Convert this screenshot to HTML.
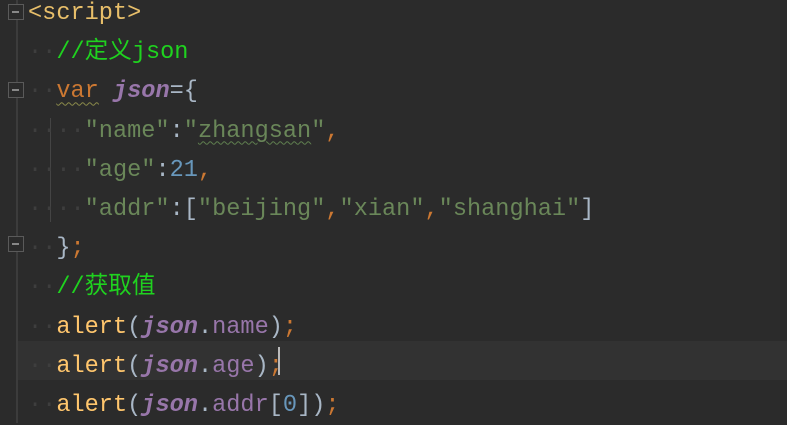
<html><head><style>
body{margin:0;width:787px;height:423px;background:#2b2b2b;overflow:hidden;position:relative;font-family:"Liberation Mono","Noto Sans CJK SC",monospace;}
.cur{position:absolute;left:17px;top:341px;width:770px;height:39px;background:#323232}
.gut{position:absolute;left:16px;top:0;width:2px;height:423px;background:#3c3c3c}
.code{position:absolute;left:28px;top:-6px;font-size:23.6px;line-height:39.2px;color:#a9b7c6;white-space:pre}
.t{color:#e8bf6a}.c{color:#1fd21f}.k{color:#cc7832}.j{color:#9876aa;font-style:italic;font-weight:bold}.s{color:#6a8759}.n{color:#6897bb}.p{color:#9876aa}.f{color:#ffc66d}
.d{color:#3e3e3e}
.w{text-decoration:underline wavy #8a8a4a;text-decoration-thickness:1px;text-underline-offset:4px}
.ws{text-decoration:underline wavy #5f7f4f;text-decoration-thickness:1px;text-underline-offset:4px}
.fold{position:absolute;left:8px;width:16px;height:16px;border:1.5px solid #5a5a5a;background:#2b2b2b;box-sizing:border-box}
.fold:after{content:"";position:absolute;left:3px;top:6px;width:7px;height:1.5px;background:#888}
.caret{position:absolute;left:278px;top:347px;width:2px;height:28px;background:#bbb}
.vg{position:absolute;left:50px;top:118px;width:1px;height:104px;background:#444}
</style></head><body>
<div class="cur"></div><div class="gut"></div><div class="vg"></div>
<div class="fold" style="top:4px"></div>
<div class="fold" style="top:82px"></div>
<div class="fold" style="top:236px"></div>
<div class="caret"></div>
<div class="code"><span class="t">&lt;script&gt;</span>
<span class="d">··</span><span class="c">//定义json</span>
<span class="d">··</span><span class="k w">var</span> <span class="j">json</span>={
<span class="d">····</span><span class="s">"name"</span>:<span class="s">"<span class="ws">zhangsan</span>"</span><span class="k">,</span>
<span class="d">····</span><span class="s">"age"</span>:<span class="n">21</span><span class="k">,</span>
<span class="d">····</span><span class="s">"addr"</span>:[<span class="s">"beijing"</span><span class="k">,</span><span class="s">"xian"</span><span class="k">,</span><span class="s">"shanghai"</span>]
<span class="d">··</span>}<span class="k">;</span>
<span class="d">··</span><span class="c">//获取值</span>
<span class="d">··</span><span class="f">alert</span>(<span class="j">json</span>.<span class="p">name</span>)<span class="k">;</span>
<span class="d">··</span><span class="f">alert</span>(<span class="j">json</span>.<span class="p">age</span>)<span class="k">;</span>
<span class="d">··</span><span class="f">alert</span>(<span class="j">json</span>.<span class="p">addr</span>[<span class="n">0</span>])<span class="k">;</span></div>
</body></html>
